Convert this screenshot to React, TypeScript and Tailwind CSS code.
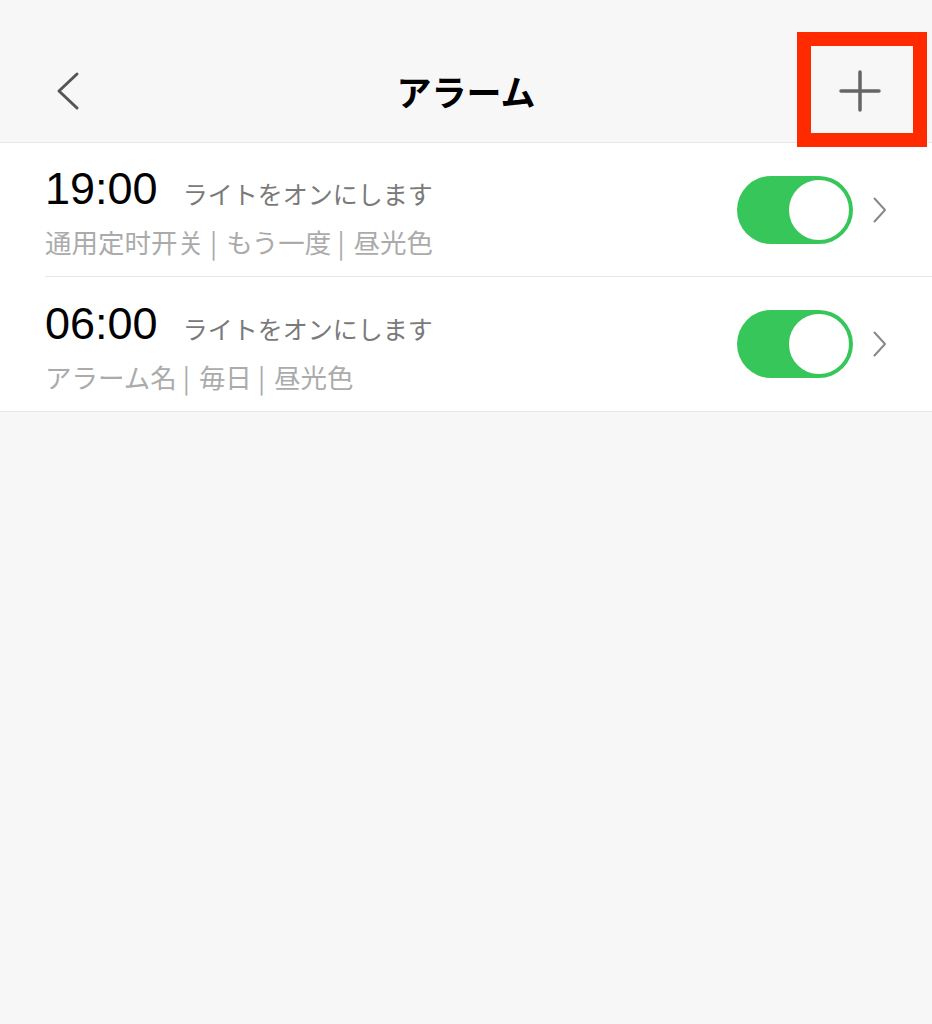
import React from "react";

const jp = { fontFamily: '"Noto Sans CJK JP", "Noto Sans CJK SC", sans-serif' };

function Toggle() {
  return (
    <div className="relative h-[68px] w-[116px] rounded-full bg-[#36c659]">
      <div className="absolute right-[2px] top-[2px] h-[64px] w-[64px] rounded-full border-2 border-[#36c659] bg-white" />
    </div>
  );
}

function Chevron() {
  return (
    <svg width="14" height="26" viewBox="0 0 14 26" fill="none">
      <path d="M1.5 1.5 L12 13 L1.5 24.5" stroke="#888" strokeWidth="2" strokeLinecap="round" strokeLinejoin="round" />
    </svg>
  );
}

function Row({ time, label, sub, divider }: { time: string; label: string; sub: string[]; divider: boolean }) {
  return (
    <div className="pl-[45px]">
      <div className={`flex h-[134px] items-center pr-[45px] ${divider ? "border-b border-[#e6e6e6]" : ""}`}>
        <div className="flex flex-1 flex-col pt-[6px]">
          <div className="flex items-baseline">
            <span className="text-[45px] leading-[48px] text-black" style={{ fontFamily: '"Liberation Sans", Arial, sans-serif' }}>
              {time}
            </span>
            <span className="ml-[25px] text-[25px] leading-[48px] text-[#7a7a7a]" style={jp}>
              {label}
            </span>
          </div>
          <div className="mt-[7px] flex items-center text-[26.5px] leading-[36px] text-[#ababab]" style={jp}>
            {sub.map((s, i) => (
              <React.Fragment key={i}>
                {i > 0 && <span className="ml-[6px] mr-[9px]">|</span>}
                <span>{s}</span>
              </React.Fragment>
            ))}
          </div>
        </div>
        <Toggle />
        <div className="ml-[20px] flex items-center">
          <Chevron />
        </div>
      </div>
    </div>
  );
}

export default function App() {
  return (
    <div className="relative min-h-[1024px] w-full bg-[#f7f7f7]">
      <div className="flex h-[143px] items-center justify-between border-b border-[#e8e8e8] bg-[#f7f7f7] px-[45px] pt-[40px]">
        <div className="flex w-[60px] items-center">
          <svg width="30" height="40" viewBox="0 0 30 40" fill="none" className="ml-[10px]">
            <path d="M22 3 L4 20 L22 37" stroke="#555" strokeWidth="3" strokeLinecap="round" strokeLinejoin="round" />
          </svg>
        </div>
        <div className="text-[35px] font-bold text-black" style={jp}>
          アラーム
        </div>
        <div className="flex w-[60px] items-center justify-end">
          <svg width="44" height="44" viewBox="0 0 44 44" fill="none" className="mr-[5px]">
            <path d="M22 3 V41 M3 22 H41" stroke="#666" strokeWidth="3.5" strokeLinecap="round" />
          </svg>
        </div>
      </div>
      <div className="border-b border-[#e6e6e6] bg-white">
        <Row time="19:00" label="ライトをオンにします" sub={["通用定时开关", "もう一度", "昼光色"]} divider />
        <Row time="06:00" label="ライトをオンにします" sub={["アラーム名", "毎日", "昼光色"]} divider={false} />
      </div>
      <div className="pointer-events-none absolute left-[797px] top-[32px] h-[115px] w-[130px] border-[14px] border-[#ff2a00]" />
    </div>
  );
}
